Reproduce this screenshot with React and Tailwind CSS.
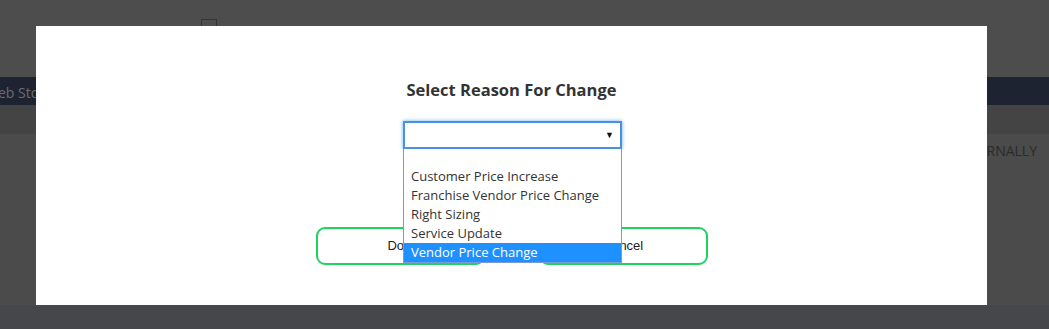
import React from 'react'

const options = [
  'Customer Price Increase',
  'Franchise Vendor Price Change',
  'Right Sizing',
  'Service Update',
  'Vendor Price Change',
]

function Backdrop() {
  return (
    <div className="flex h-[329px] w-[1049px] flex-col overflow-hidden bg-[#4b4b4b] font-['Open_Sans',sans-serif]">
      <div className="h-[77px] bg-[#4d4d4d] pl-[201px] pt-[19px]">
        <div className="h-4 w-4 border border-[#353535]" />
      </div>
      <div className="flex h-[28px] items-center overflow-hidden bg-[#1e2331] pt-[2px] text-[14px] text-[#6a6c70]">
        <span className="ml-[-15px] whitespace-nowrap">Web Store</span>
      </div>
      <div className="h-[29px] bg-[#444444]" />
      <div className="flex flex-1 justify-end pr-[12px] pt-[6px] text-[14px] text-[#2a2a2a]">
        INTERNALLY
      </div>
      <div className="h-[24px] bg-[#46474a]" />
    </div>
  )
}

function Modal() {
  return (
    <div className="absolute left-[36px] top-[26px] flex h-[279px] w-[951px] flex-col items-center bg-white pt-[52px] font-['Open_Sans',sans-serif]">
      <h2 className="text-[16.5px] font-bold leading-[24px] text-[#333333]">Select Reason For Change</h2>
      <div className="relative ml-[2px] mt-[19px] w-[219px]">
        <div className="flex h-[28px] items-center justify-end border-2 border-[#4a90e2] pr-[6px] shadow-[0_0_4px_#6aaef0]">
          <span className="text-[9px] text-[#111]">▼</span>
        </div>
        <div className="absolute left-0 top-[28px] z-10 w-[219px] border border-t-0 border-[#7a9ad6] bg-white text-[13px] text-[#333]">
          <div className="h-[18px]" />
          {options.map((o, i) => (
            <div
              key={o}
              className={
                i === options.length - 1
                  ? 'flex h-[19px] items-center bg-[#1e90ff] pl-[7px] text-white'
                  : 'flex h-[19px] items-center pl-[7px]'
              }
            >
              {o}
            </div>
          ))}
        </div>
      </div>
      <div className="mt-[78px] flex gap-[54px]">
        <button className="h-[38px] w-[169px] rounded-[9px] border-2 border-[#1ed35f] bg-white pl-[6px] text-[13px] text-[#222] font-['Liberation_Sans',sans-serif]">
          Done
        </button>
        <button className="h-[38px] w-[169px] rounded-[9px] border-2 border-[#1ed35f] bg-white text-[13px] text-[#222] font-['Liberation_Sans',sans-serif]">
          Cancel
        </button>
      </div>
    </div>
  )
}

export default function App() {
  return (
    <div className="relative h-[329px] w-[1049px]">
      <Backdrop />
      <Modal />
    </div>
  )
}
